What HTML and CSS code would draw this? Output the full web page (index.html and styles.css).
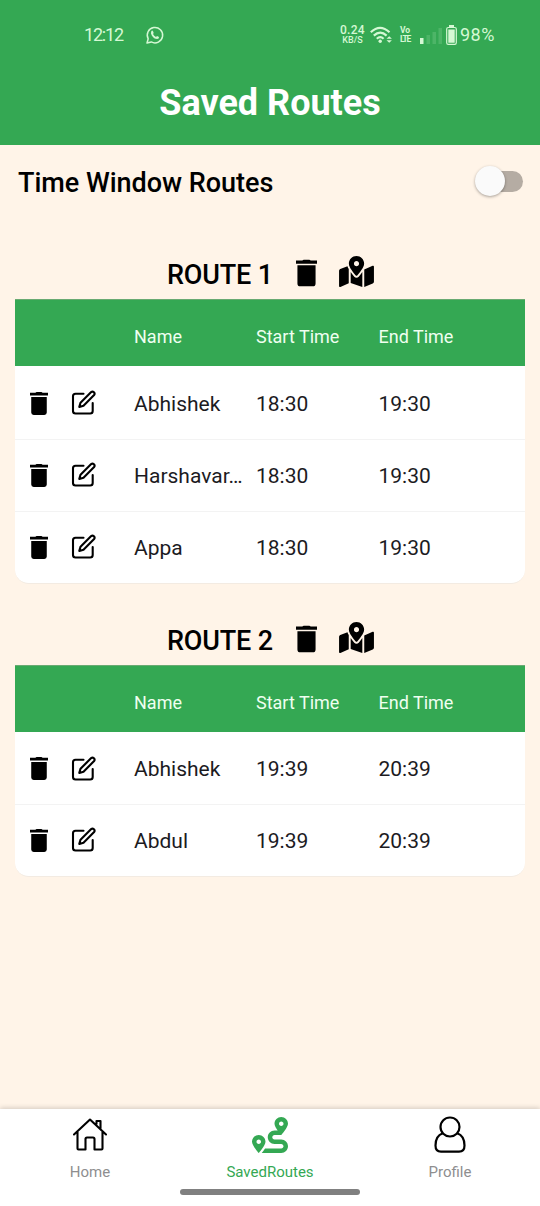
FILE: index.html
```html
<!DOCTYPE html>
<html lang="en">
<head>
<meta charset="utf-8">
<title>Saved Routes</title>
<link rel="stylesheet" href="styles.css">
</head>
<body>
<svg class="defs" aria-hidden="true">
  <symbol id="trash" viewBox="0 0 22 28"><path d="M6.500 1 8 0h6l1.500 1H22v3.200H0V1zM1.500 6h19v19q0 3-3 3h-13q-3 0-3-3z"/></symbol>
  <symbol id="edit" viewBox="0 0 26 26"><g fill="none" stroke="currentColor" stroke-width="2.100" stroke-linejoin="round" stroke-linecap="round"><path d="M12.500 3.800H4.500Q2 3.800 2 6.300V21Q2 23.500 4.500 23.500H19.200Q21.700 23.500 21.700 21V13"/><path d="M8.300 16.900 9.500 12.700 20.200 2.100Q21.500 1 22.900 2.200 24.200 3.600 23.100 5L12.500 15.700z"/></g></symbol>
  <symbol id="map" viewBox="0 0 576 512"><path d="M288 0c-69.590 0-126 56.410-126 126 0 56.260 82.350 158.800 113.900 196.020 6.390 7.540 17.820 7.540 24.200 0C331.650 284.800 414 182.260 414 126 414 56.410 357.590 0 288 0zm0 168c-23.200 0-42-18.800-42-42s18.800-42 42-42 42 18.800 42 42-18.800 42-42 42zM20.120 215.950A32 32 0 0 0 0 245.660v250.320c0 11.320 11.430 19.060 21.940 14.860L160 448V214.920c-8.840-15.980-16.070-31.540-21.250-46.420L20.120 215.950zM288 359.670c-14.070 0-27.380-6.180-36.510-16.960-19.660-23.200-40.570-49.620-59.490-76.720v182l192 64V266c-18.920 27.090-39.820 53.520-59.490 76.720-9.130 10.770-22.440 16.950-36.510 16.950zm266.060-198.510L416 224v288l139.880-55.950A32 32 0 0 0 576 426.340V176.020c0-11.320-11.430-19.060-21.940-14.860z"/></symbol>
</svg>
<div class="app">
  <header class="header">
    <div class="status">
      <span class="clock">12:12</span>
      <svg class="chat" width="18" height="18" viewBox="0 0 18 18"><path d="M1 17 2.200 12.800A7.700 7.700 0 1 1 5.300 15.900z" fill="none" stroke="currentColor" stroke-width="1.500" stroke-linejoin="round"/><path d="M5.300 5.200Q6.300 4 7 5.200L7.700 6.900 7 8Q8 10 10 10.900L11 9.900 13 10.900Q13.200 12.800 11.200 13 8 13 5.800 9.500 4.300 7 5.300 5.200z"/></svg>
      <span class="speed"><b>0.24</b><small>KB/S</small></span>
      <svg class="wifi" width="23" height="18" viewBox="0 0 23 18"><g fill="none" stroke="currentColor" stroke-width="2.200"><path d="M.8 6.300Q10 -2.500 19.500 6.300M3.800 9.600Q10.200 3.500 16.600 9.600M6.800 12.700Q10.200 9.500 13.600 12.700"/></g><circle cx="10.200" cy="15.300" r="1.700"/><path d="m16.500 12.700 2.700-2.400 2.700 2.400zM16.500 14.300h5.400l-2.700 2.400z"/></svg>
      <span class="volte"><span class="vo">Vo</span><span>LTE</span></span>
      <svg class="signal" width="22" height="16" viewBox="0 0 22 16"><path d="M0 10h3.500v6H0z"/><path opacity=".16" d="M6.500 7H10v9H6.500zM12.500 4H16v12h-3.500zM18.500 0H22v16h-3.500z"/></svg>
      <svg class="battery" width="11" height="20" viewBox="0 0 11 20"><path d="M3 0h5v2H3zM2.300 4.500h6.400v13.200H2.300z"/><rect x=".7" y="2.500" width="9.600" height="16.800" rx="1.600" fill="none" stroke="currentColor" stroke-width="1.200"/></svg>
      <span class="percent">98%</span>
    </div>
    <h1 class="title">Saved Routes</h1>
  </header>
  <main class="main">
    <div class="window-row">
      <h2 class="window-label">Time Window Routes</h2>
      <div class="switch"><span class="knob"></span></div>
    </div>
    <section class="route">
      <div class="route-head"><h3>ROUTE 1</h3><svg class="trash-lg"><use href="#trash"/></svg><svg class="map"><use href="#map"/></svg></div>
      <div class="table">
        <div class="row thead"><span></span><span>Name</span><span>Start Time</span><span>End Time</span></div>
        <div class="row"><div class="actions"><svg class="trash"><use href="#trash"/></svg><svg class="edit"><use href="#edit"/></svg></div><span class="name">Abhishek</span><span>18:30</span><span>19:30</span></div>
        <div class="row"><div class="actions"><svg class="trash"><use href="#trash"/></svg><svg class="edit"><use href="#edit"/></svg></div><span class="name">Harshavar…</span><span>18:30</span><span>19:30</span></div>
        <div class="row"><div class="actions"><svg class="trash"><use href="#trash"/></svg><svg class="edit"><use href="#edit"/></svg></div><span class="name">Appa</span><span>18:30</span><span>19:30</span></div>
      </div>
    </section>
    <section class="route">
      <div class="route-head"><h3>ROUTE 2</h3><svg class="trash-lg"><use href="#trash"/></svg><svg class="map"><use href="#map"/></svg></div>
      <div class="table">
        <div class="row thead"><span></span><span>Name</span><span>Start Time</span><span>End Time</span></div>
        <div class="row"><div class="actions"><svg class="trash"><use href="#trash"/></svg><svg class="edit"><use href="#edit"/></svg></div><span class="name">Abhishek</span><span>19:39</span><span>20:39</span></div>
        <div class="row"><div class="actions"><svg class="trash"><use href="#trash"/></svg><svg class="edit"><use href="#edit"/></svg></div><span class="name">Abdul</span><span>19:39</span><span>20:39</span></div>
      </div>
    </section>
  </main>
  <nav class="tabs">
    <div class="tab-list">
      <div class="tab"><svg width="36" height="36" viewBox="0 0 36 36"><g fill="none" stroke="#000" stroke-width="2.100" stroke-linejoin="round" stroke-linecap="round"><path d="M2 17.500 18 2.500 34 17.500M5.500 15V31.500Q5.500 32.500 6.500 32.500H13.500V22Q13.500 20.500 15 20.500H21Q22.500 20.500 22.500 22V32.500H29.500Q30.500 32.500 30.500 31.500V15M24.500 7V4H28.500V11.500"/></g></svg><span>Home</span></div>
      <div class="tab active"><svg width="36" height="36" viewBox="0 0 512 512"><path d="M416 320h-96c-17.600 0-32-14.400-32-32s14.400-32 32-32h96s96-107 96-160-43-96-96-96-96 43-96 96c0 25.500 22.200 63.400 45.300 96H320c-52.900 0-96 43.100-96 96s43.100 96 96 96h96c17.600 0 32 14.400 32 32s-14.400 32-32 32H185.500c-16 24.800-33.800 47.700-47.300 64H416c52.900 0 96-43.100 96-96s-43.100-96-96-96zm0-256c17.700 0 32 14.300 32 32s-14.300 32-32 32-32-14.300-32-32 14.300-32 32-32zM96 256c-53 0-96 43-96 96s96 160 96 160 96-107 96-160-43-96-96-96zm0 128c-17.700 0-32-14.300-32-32s14.300-32 32-32 32 14.300 32 32-14.300 32-32 32z"/></svg><span>SavedRoutes</span></div>
      <div class="tab"><svg width="36" height="36" viewBox="0 0 36 36"><g fill="none" stroke="#000" stroke-width="2.200"><circle cx="18" cy="10" r="9.500"/><path d="M10.700 16.300C6 18 3.500 23 3.500 28.500Q3.500 34.700 9 34.700H27Q32.500 34.700 32.500 28.500C32.500 23 30 18 25.300 16.300"/></g></svg><span>Profile</span></div>
    </div>
    <div class="home-bar"></div>
  </nav>
</div>
</body>
</html>
```
FILE: styles.css
```css
* { box-sizing: border-box; }
body { margin: 0; font-family: Roboto, sans-serif; background: #fff4e8; color: #000; }
h1, h2, h3 { margin: 0; }
svg { display: block; flex: none; fill: currentColor; overflow: visible; }
.defs { display: none; }
.app { width: 540px; height: 1206px; display: flex; flex-direction: column; overflow: hidden; }

.header { height: 145px; background: #34a853; color: #fff; }
.status { height: 69px; display: flex; align-items: center; padding-left: 84px; color: #d5f8d4; }
.clock { width: 62px; font-size: 18px; letter-spacing: -1.200px; }
.speed { width: 25px; margin-left: 176px; display: flex; flex-direction: column; align-items: center; }
.speed b { font-size: 12px; line-height: 11px; font-weight: 500; letter-spacing: .3px; }
.speed small { font-size: 9px; line-height: 9px; font-weight: 500; }
.wifi { margin-left: 5px; }
.volte { width: 12px; margin-left: 7px; display: flex; flex-direction: column; font-size: 8.500px; font-weight: 700; line-height: 9px; letter-spacing: -1.200px; white-space: nowrap; }
.vo { letter-spacing: -.2px; }
.signal { margin: 3px 0 0 8px; }
.battery { margin-left: 4px; }
.percent { margin-left: 3px; font-size: 18px; letter-spacing: .5px; }
.title { text-align: center; font-size: 36px; line-height: 42px; padding-top: 13px; font-weight: 700; }

.main { flex: 1; }
.window-row { height: 74px; padding: 0 17px 0 18px; display: flex; justify-content: space-between; align-items: center; }
.window-label { padding-top: 2px; font-size: 27px; font-weight: 500; letter-spacing: -.02px; }
.switch { width: 45px; height: 21px; margin-bottom: 2px; border-radius: 11px; background: #b5aca3; display: flex; align-items: center; }
.knob { flex: none; width: 30px; height: 30px; margin-left: -3px; border-radius: 50%; background: #fafafa; box-shadow: 0 1px 3px rgba(0,0,0,.35); }

.route { padding: 30px 15px 0; }
.route + .route { padding-top: 31px; }
.route-head { height: 50px; padding-left: 152px; display: flex; align-items: center; }
.route-head h3 { width: 129px; padding-top: 2px; font-size: 27px; font-weight: 500; letter-spacing: -.15px; white-space: nowrap; }
.trash-lg { width: 21px; height: 28px; margin-top: -2px; }
.map { width: 35px; height: 31px; margin: -5px 0 0 22px; }
.table { background: #fff; border-radius: 0 0 14px 14px; overflow: hidden; border-bottom: 1px solid #f3ebe2; }
.row { height: 72px; display: grid; grid-template-columns: 119px 122px 122.500px 1fr; align-items: center; font-size: 21px; color: #1c1b1f; border-top: 1px solid #f3f3f3; }
.thead { height: 67px; padding-top: 7px; border-top-color: #69aa72; background: #34a853; color: #effff0; font-size: 18px; }
.thead + .row { height: 73px; padding-top: 1px; border-top-color: #fff; }
.route + .route .thead + .row { height: 72px; }
.row .name { white-space: nowrap; }
.actions { display: flex; align-items: center; padding-left: 15px; margin-top: -1px; color: #000; }
.trash { width: 18px; height: 23px; }
.edit { width: 26px; height: 26px; margin-left: 23px; }

.tabs { height: 97.500px; background: #fff; box-shadow: 0 -1px 5px rgba(0,0,0,.18); }
.tab-list { display: flex; height: 80.500px; padding-top: 8.500px; }
.tab { flex: 1; display: flex; flex-direction: column; align-items: center; gap: 9px; font-size: 15px; line-height: 20px; color: #8e8e8f; }
.tab.active { color: #34a853; }
.home-bar { width: 180px; height: 6px; border-radius: 3px; margin: 0 auto; background: #808080; }
```
